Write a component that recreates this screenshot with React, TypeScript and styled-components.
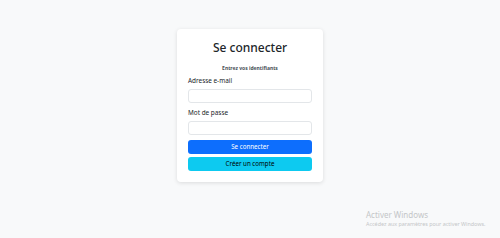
import React from "react";
import styled, { createGlobalStyle } from "styled-components";

const Global = createGlobalStyle`
  html, body { margin: 0; padding: 0; }
  body {
    background: #f8f9fa;
    font-family: "Noto Sans", "Open Sans", sans-serif;
    color: #212529;
  }
  * { box-sizing: border-box; }
`;

const Page = styled.div`
  width: 500px;
  height: 238px;
  display: flex;
  justify-content: center;
  align-items: flex-start;
  padding-top: 29px;
  position: relative;
  overflow: hidden;
`;

const Card = styled.div`
  width: 146px;
  background: #fff;
  border-radius: 4px;
  box-shadow: 0 1px 4px rgba(0, 0, 0, 0.12);
  padding: 10px 11px 11px;
  display: flex;
  flex-direction: column;
`;

const Title = styled.h1`
  margin: 0;
  font-size: 12px;
  font-weight: 500;
  text-align: center;
  line-height: 18px;
`;

const Subtitle = styled.p`
  margin: 7px 0 0;
  font-size: 5px;
  font-weight: 700;
  text-align: center;
  color: #495057;
  line-height: 8px;
`;

const Field = styled.div<{ $top: number }>`
  margin-top: ${(p) => p.$top}px;
  display: flex;
  flex-direction: column;
`;

const Label = styled.label`
  font-size: 6.4px;
  line-height: 8px;
  color: #212529;
  margin-bottom: 4px;
`;

const Input = styled.input`
  height: 14px;
  width: 100%;
  border: 1px solid #e3e6e9;
  border-radius: 3px;
  background: #fff;
  padding: 0 4px;
  font-size: 6px;
  outline: none;
`;

const Button = styled.button<{ $variant: "primary" | "info"; $top: number }>`
  margin-top: ${(p) => p.$top}px;
  height: 14px;
  width: 100%;
  border: none;
  border-radius: 3px;
  font-family: inherit;
  font-size: 6.2px;
  line-height: 14px;
  padding: 0;
  cursor: pointer;
  background: ${(p) => (p.$variant === "primary" ? "#0d6efd" : "#0dcaf0")};
  color: ${(p) => (p.$variant === "primary" ? "#fff" : "#000")};
`;

const Watermark = styled.div`
  position: absolute;
  left: 366px;
  top: 210px;
  color: #c4c6c8;
  display: flex;
  flex-direction: column;
`;

const WmTitle = styled.span`
  font-size: 8px;
  line-height: 10px;
`;

const WmSub = styled.span`
  font-size: 5.4px;
  line-height: 8px;
`;

export default function App() {
  return (
    <>
      <Global />
      <Page>
        <Card>
          <Title>Se connecter</Title>
          <Subtitle>Entrez vos identifiants</Subtitle>
          <Field $top={5}>
            <Label>Adresse e-mail</Label>
            <Input type="email" />
          </Field>
          <Field $top={6}>
            <Label>Mot de passe</Label>
            <Input type="password" />
          </Field>
          <Button $variant="primary" $top={5}>Se connecter</Button>
          <Button $variant="info" $top={3}>Créer un compte</Button>
        </Card>
        <Watermark>
          <WmTitle>Activer Windows</WmTitle>
          <WmSub>Accédez aux paramètres pour activer Windows.</WmSub>
        </Watermark>
      </Page>
    </>
  );
}
